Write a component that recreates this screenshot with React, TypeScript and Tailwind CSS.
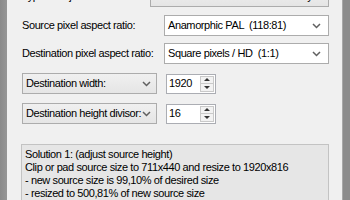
import React from 'react';

const Chevron = () => (
  <svg width="9" height="6" viewBox="0 0 9 6" className="shrink-0">
    <path d="M1 1 L4.5 4.5 L8 1" fill="none" stroke="#606060" strokeWidth="1.5" />
  </svg>
);

const WhiteCombo = ({ value }: { value: string }) => (
  <div className="flex-1 h-[21px] flex items-center justify-between bg-white border border-[#acacac] pl-[3px] pr-[7px]">
    <span className="whitespace-pre">{value}</span>
    <Chevron />
  </div>
);

const GrayCombo = ({ value }: { value: string }) => (
  <div className="w-[135px] h-[21px] flex items-center justify-between bg-gradient-to-b from-[#f0f0f0] to-[#e5e5e5] border border-[#acacac] pl-[3px] pr-[5px]">
    <span className="whitespace-pre">{value}</span>
    <Chevron />
  </div>
);

const Spinner = ({ value }: { value: string }) => (
  <div className="ml-[9px] w-[50px] h-[20px] flex items-center bg-white border border-[#abadb3]">
    <span className="flex-1 pl-[2px]">{value}</span>
    <div className="w-[14px] h-[16px] mr-px flex flex-col border border-[#c9c9c9] bg-[#f2f2f2]">
      <div className="flex-1 flex items-center justify-center border-b border-[#c9c9c9]">
        <div className="w-0 h-0 border-x-[3px] border-x-transparent border-b-[3px] border-b-[#333]" />
      </div>
      <div className="flex-1 flex items-center justify-center">
        <div className="w-0 h-0 border-x-[3px] border-x-transparent border-t-[3px] border-t-[#333]" />
      </div>
    </div>
  </div>
);

export default function App() {
  const lines = [
    'Solution 1: (adjust source height)',
    'Clip or pad source size to 711x440 and resize to 1920x816',
    '- new source size is 99,10% of desired size',
    '- resized to 500,81% of new source size',
  ];

  return (
    <div className="w-[350px] h-[200px] overflow-hidden flex bg-[#f0f0f0] text-[11px] tracking-[-0.4px] text-black font-['Liberation_Sans',Arial,sans-serif]">
      <div className="w-[7px] bg-gradient-to-r from-[#8a8a8a] to-[#969696]" />

      <div className="flex-1 flex flex-col pl-[15px] pr-[13px]">
        {/* top row, scrolled partly out of view */}
        <div className="mt-[-14px] h-[21px] flex items-center">
          <span className="w-[128px] whitespace-nowrap">Type of adjustment:</span>
          <div className="flex-1 h-[21px] flex items-center justify-center whitespace-nowrap bg-gradient-to-b from-[#f0f0f0] to-[#e5e5e5] border border-[#acacac]">
            Reduce source size if necessary
          </div>
        </div>

        <div className="mt-[8px] h-[21px] flex items-center">
          <span className="w-[142px] whitespace-nowrap">Source pixel aspect ratio:</span>
          <WhiteCombo value="Anamorphic PAL  (118:81)" />
        </div>

        <div className="mt-[7px] h-[21px] flex items-center">
          <span className="w-[142px] whitespace-nowrap">Destination pixel aspect ratio:</span>
          <WhiteCombo value="Square pixels / HD  (1:1)" />
        </div>

        <div className="mt-[9px] flex items-center">
          <GrayCombo value="Destination width:" />
          <Spinner value="1920" />
        </div>

        <div className="mt-[9px] flex items-center">
          <GrayCombo value="Destination height divisor:" />
          <Spinner value="16" />
        </div>

        <div className="mt-[20px] -ml-px flex-1 bg-[#e6e6e6] border border-[#c3c3c3] pt-[3px] pl-[3px] leading-[13px]">
          {lines.map((l) => (
            <div key={l} className="whitespace-nowrap">{l}</div>
          ))}
        </div>
      </div>

      <div className="w-[8px] flex">
        <div className="w-px bg-[#a8a8a8]" />
        <div className="flex-1 bg-[#8c8c8c]" />
      </div>
    </div>
  );
}
